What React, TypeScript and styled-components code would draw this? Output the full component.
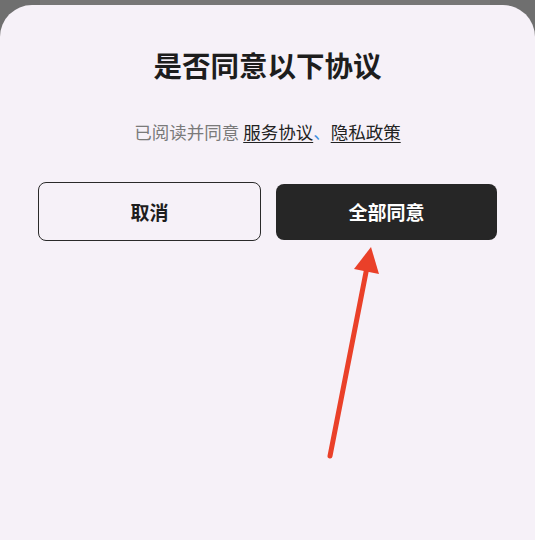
import React from "react";
import styled, { createGlobalStyle } from "styled-components";

const GlobalStyle = createGlobalStyle`
  html, body {
    margin: 0;
    padding: 0;
    background: #6f6f6f;
    font-family: "Noto Sans CJK SC", "Noto Sans", sans-serif;
  }
`;

const Backdrop = styled.div`
  position: relative;
  width: 535px;
  height: 540px;
  padding-top: 5px;
  box-sizing: border-box;
  background: linear-gradient(
    to right,
    #6f6f6f 0,
    #6f6f6f 40px,
    #777777 40px,
    #777777 490px,
    #6f6f6f 490px
  );
  overflow: hidden;
`;

const Sheet = styled.div`
  height: 100%;
  background: #f6f1f8;
  border-radius: 32px 32px 0 0;
  display: flex;
  flex-direction: column;
  align-items: center;
  padding: 43px 38px 0;
  box-sizing: border-box;
`;

const Title = styled.h1`
  margin: 0;
  font-size: 28.5px;
  line-height: 34px;
  font-weight: 700;
  color: #1d1d1d;
`;

const Notice = styled.p`
  margin: 38px 0 0;
  font-size: 17.5px;
  line-height: 24px;
  color: #7a7a7a;
`;

const Link = styled.a`
  color: #222222;
  text-decoration: underline;
  text-decoration-thickness: 1px;
  text-underline-offset: 3px;
`;

const Sep = styled.span`
  color: #3d8fe0;
`;

const ButtonRow = styled.div`
  margin-top: 38px;
  width: 100%;
  display: flex;
  align-items: center;
  gap: 15px;
`;

const Button = styled.button<{ $primary?: boolean }>`
  flex: 1;
  height: ${({ $primary }) => ($primary ? "56px" : "59px")};
  border-radius: 8px;
  border: ${({ $primary }) => ($primary ? "none" : "1px solid #2a2a2a")};
  background: ${({ $primary }) => ($primary ? "#262626" : "transparent")};
  color: ${({ $primary }) => ($primary ? "#ffffff" : "#1d1d1d")};
  font-family: inherit;
  font-size: 19px;
  font-weight: 700;
  cursor: pointer;
`;

const Arrow = styled.svg`
  position: absolute;
  left: 0;
  top: 0;
  pointer-events: none;
`;

export default function App() {
  return (
    <>
      <GlobalStyle />
      <Backdrop>
        <Sheet>
          <Title>是否同意以下协议</Title>
          <Notice>
            已阅读并同意 <Link>服务协议</Link>
            <Sep>、</Sep>
            <Link>隐私政策</Link>
          </Notice>
          <ButtonRow>
            <Button>取消</Button>
            <Button $primary>全部同意</Button>
          </ButtonRow>
        </Sheet>
        <Arrow width="535" height="540" viewBox="0 0 535 540">
          <line
            x1="330"
            y1="456"
            x2="368"
            y2="262"
            stroke="#ea4029"
            strokeWidth="5"
            strokeLinecap="round"
          />
          <polygon points="371,247 354,269 379,274" fill="#ea4029" />
        </Arrow>
      </Backdrop>
    </>
  );
}
